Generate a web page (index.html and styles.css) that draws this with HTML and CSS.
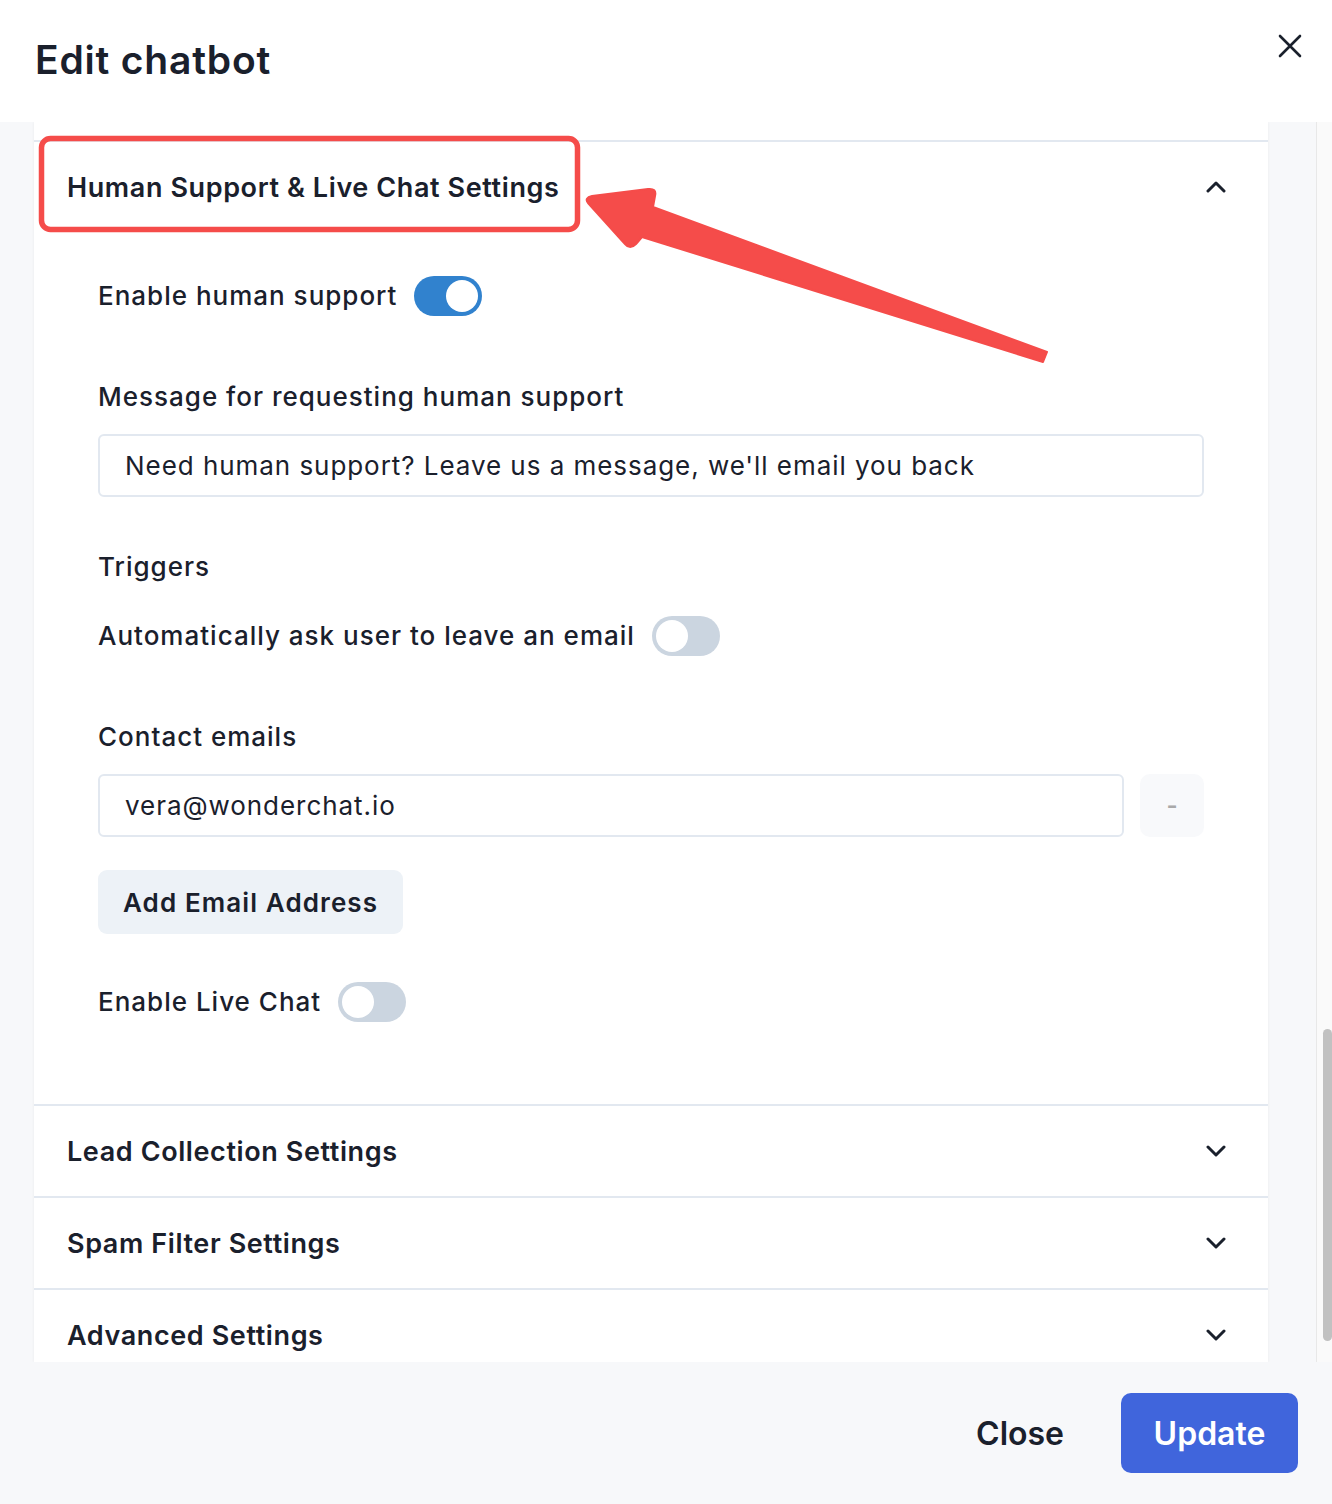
FILE: index.html
```html
<!DOCTYPE html>
<html lang="en">
<head>
<meta charset="utf-8">
<title>Edit chatbot</title>
<link rel="stylesheet" href="styles.css">
</head>
<body>
<div class="modal">
  <header class="modal-header">
    <h1 class="modal-title">Edit chatbot</h1>
    <button class="close-x" aria-label="Close">
      <svg width="24" height="24" viewBox="0 0 24 24"><path d="M2 2 L22 22 M22 2 L2 22" stroke="#1a202c" stroke-width="2.6" stroke-linecap="round" fill="none"/></svg>
    </button>
  </header>

  <div class="modal-body">
    <div class="card">
      <div class="acc-item open">
        <div class="acc-header">
          <span class="acc-title">Human Support &amp; Live Chat Settings</span>
          <svg class="chev" width="20" height="12" viewBox="0 0 20 12"><path d="M2 10 L10 2 L18 10" stroke="#1a202c" stroke-width="3" fill="none" stroke-linecap="round" stroke-linejoin="round"/></svg>
        </div>
        <div class="acc-panel">
          <div class="switch-row r1">
            <span class="label">Enable human support</span>
            <span class="switch on"><span class="knob"></span></span>
          </div>
          <div class="label field-label r2">Message for requesting human support</div>
          <div class="input">Need human support? Leave us a message, we'll email you back</div>
          <div class="label field-label r3">Triggers</div>
          <div class="switch-row r4">
            <span class="label">Automatically ask user to leave an email</span>
            <span class="switch"><span class="knob"></span></span>
          </div>
          <div class="label field-label r2">Contact emails</div>
          <div class="email-row">
            <div class="input grow">vera@wonderchat.io</div>
            <button class="minus-btn">-</button>
          </div>
          <button class="add-btn">Add Email Address</button>
          <div class="switch-row r5">
            <span class="label">Enable Live Chat</span>
            <span class="switch"><span class="knob"></span></span>
          </div>
        </div>
      </div>
      <div class="acc-item">
        <div class="acc-header">
          <span class="acc-title">Lead Collection Settings</span>
          <svg class="chev" width="20" height="12" viewBox="0 0 20 12"><path d="M2 2 L10 10 L18 2" stroke="#1a202c" stroke-width="3" fill="none" stroke-linecap="round" stroke-linejoin="round"/></svg>
        </div>
      </div>
      <div class="acc-item">
        <div class="acc-header">
          <span class="acc-title">Spam Filter Settings</span>
          <svg class="chev" width="20" height="12" viewBox="0 0 20 12"><path d="M2 2 L10 10 L18 2" stroke="#1a202c" stroke-width="3" fill="none" stroke-linecap="round" stroke-linejoin="round"/></svg>
        </div>
      </div>
      <div class="acc-item">
        <div class="acc-header">
          <span class="acc-title">Advanced Settings</span>
          <svg class="chev" width="20" height="12" viewBox="0 0 20 12"><path d="M2 2 L10 10 L18 2" stroke="#1a202c" stroke-width="3" fill="none" stroke-linecap="round" stroke-linejoin="round"/></svg>
        </div>
      </div>
    </div>
    <div class="gutter"></div>
    <div class="scrollbar"><div class="thumb"></div></div>
  </div>

  <footer class="modal-footer">
    <button class="ghost-btn">Close</button>
    <button class="primary-btn">Update</button>
  </footer>

  <svg class="annotation" width="1332" height="1504" viewBox="0 0 1332 1504">
    <rect x="41.5" y="138.5" width="536" height="91" rx="9" ry="9" fill="none" stroke="#f54c4a" stroke-width="5.5"/>
    <path d="M588 203 Q584 198 592 196 L648 189 Q657 188 655 196 L653 207 L1047 352 L1043 362 L642 237 L636 244 Q630 250 625 244 Z" fill="#f54c4a" stroke="#f54c4a" stroke-width="2" stroke-linejoin="round"/>
  </svg>
</div>
</body>
</html>
```

FILE: styles.css
```css
* { box-sizing: border-box; }
html, body { margin: 0; padding: 0; }
body {
  width: 1332px;
  height: 1504px;
  overflow: hidden;
  font-family: Inter, "Noto Sans", sans-serif;
  color: #1a202c;
  background: #ffffff;
}
button { font-family: inherit; border: none; cursor: pointer; }

.modal {
  position: relative;
  display: flex;
  flex-direction: column;
  height: 1504px;
}

.modal-header {
  height: 122px;
  flex: none;
  display: flex;
  justify-content: space-between;
  align-items: flex-start;
  padding: 0 30px 0 35px;
  background: #fff;
}
.modal-title {
  margin: 36px 0 0;
  font-size: 39px;
  font-weight: 600;
  line-height: 48px;
  letter-spacing: 0.8px;
}
.close-x {
  margin-top: 34px;
  width: 24px;
  height: 24px;
  padding: 0;
  background: none;
}
.close-x svg { display: block; }

.modal-body {
  flex: 1;
  display: flex;
  background: #f7f8fa;
  overflow: hidden;
}
.card {
  margin-left: 34px;
  width: 1234px;
  flex: none;
  background: #fff;
  padding-top: 18px;
  box-shadow: 0 0 3px rgba(0,0,0,0.06);
}
.gutter { width: 48px; flex: none; }
.scrollbar {
  width: 16px;
  flex: none;
  background: #fafafa;
  border-left: 1px solid #e8e8e8;
  position: relative;
}
.thumb {
  position: absolute;
  left: 6px;
  right: 0;
  top: 907px;
  height: 312px;
  background: #c1c1c1;
  border-radius: 5px;
}

.acc-item { border-top: 2px solid #e2e8f0; }
.acc-header {
  height: 90px;
  display: flex;
  align-items: center;
  justify-content: space-between;
  padding: 0 42px 0 33px;
}
.acc-title {
  font-size: 27px;
  font-weight: 600;
  letter-spacing: 0.6px;
}
.chev { display: block; }

.acc-panel {
  padding: 44px 64px 82px 64px;
}
.label {
  font-size: 26px;
  font-weight: 500;
  line-height: 40px;
  letter-spacing: 1px;
}
.switch-row {
  display: flex;
  align-items: center;
  gap: 17px;
  height: 40px;
}
.switch {
  width: 68px;
  height: 40px;
  border-radius: 20px;
  background: #cbd5e0;
  padding: 4px;
  display: flex;
}
.switch.on { background: #3182ce; justify-content: flex-end; }
.knob {
  width: 32px;
  height: 32px;
  border-radius: 50%;
  background: #fff;
}
.field-label { margin-bottom: 17px; }
.r2 { margin-top: 61px; }
.r3 { margin-top: 50px; margin-bottom: 29px; }
.r5 { margin-top: 48px; }

.input {
  height: 63px;
  border: 2px solid #e2e8f0;
  border-radius: 6px;
  padding: 0 25px;
  display: flex;
  align-items: center;
  font-size: 26px;
  font-weight: 400;
  letter-spacing: 0.95px;
}
.email-row {
  display: flex;
  gap: 16px;
}
.grow { flex: 1; }
.minus-btn {
  width: 64px;
  height: 63px;
  border-radius: 10px;
  background: #f8f9fb;
  color: #a9a9a9;
  font-size: 24px;
  font-weight: 600;
}
.add-btn {
  margin-top: 33px;
  height: 64px;
  padding: 0 25px;
  border-radius: 9px;
  background: #edf2f7;
  color: #1a202c;
  font-size: 26px;
  font-weight: 600;
  letter-spacing: 1.1px;
}

.modal-footer {
  height: 142px;
  flex: none;
  background: #f7f8fa;
  display: flex;
  justify-content: flex-end;
  align-items: center;
  padding-right: 34px;
}
.ghost-btn {
  background: none;
  font-size: 32px;
  font-weight: 600;
  color: #1a202c;
  padding: 0 32px;
  height: 80px;
  margin-right: 25px;
}
.primary-btn {
  width: 177px;
  height: 80px;
  border-radius: 10px;
  background: #4065dc;
  color: #fff;
  font-size: 32px;
  font-weight: 600;
}

.annotation {
  position: absolute;
  left: 0;
  top: 0;
  pointer-events: none;
}
```
